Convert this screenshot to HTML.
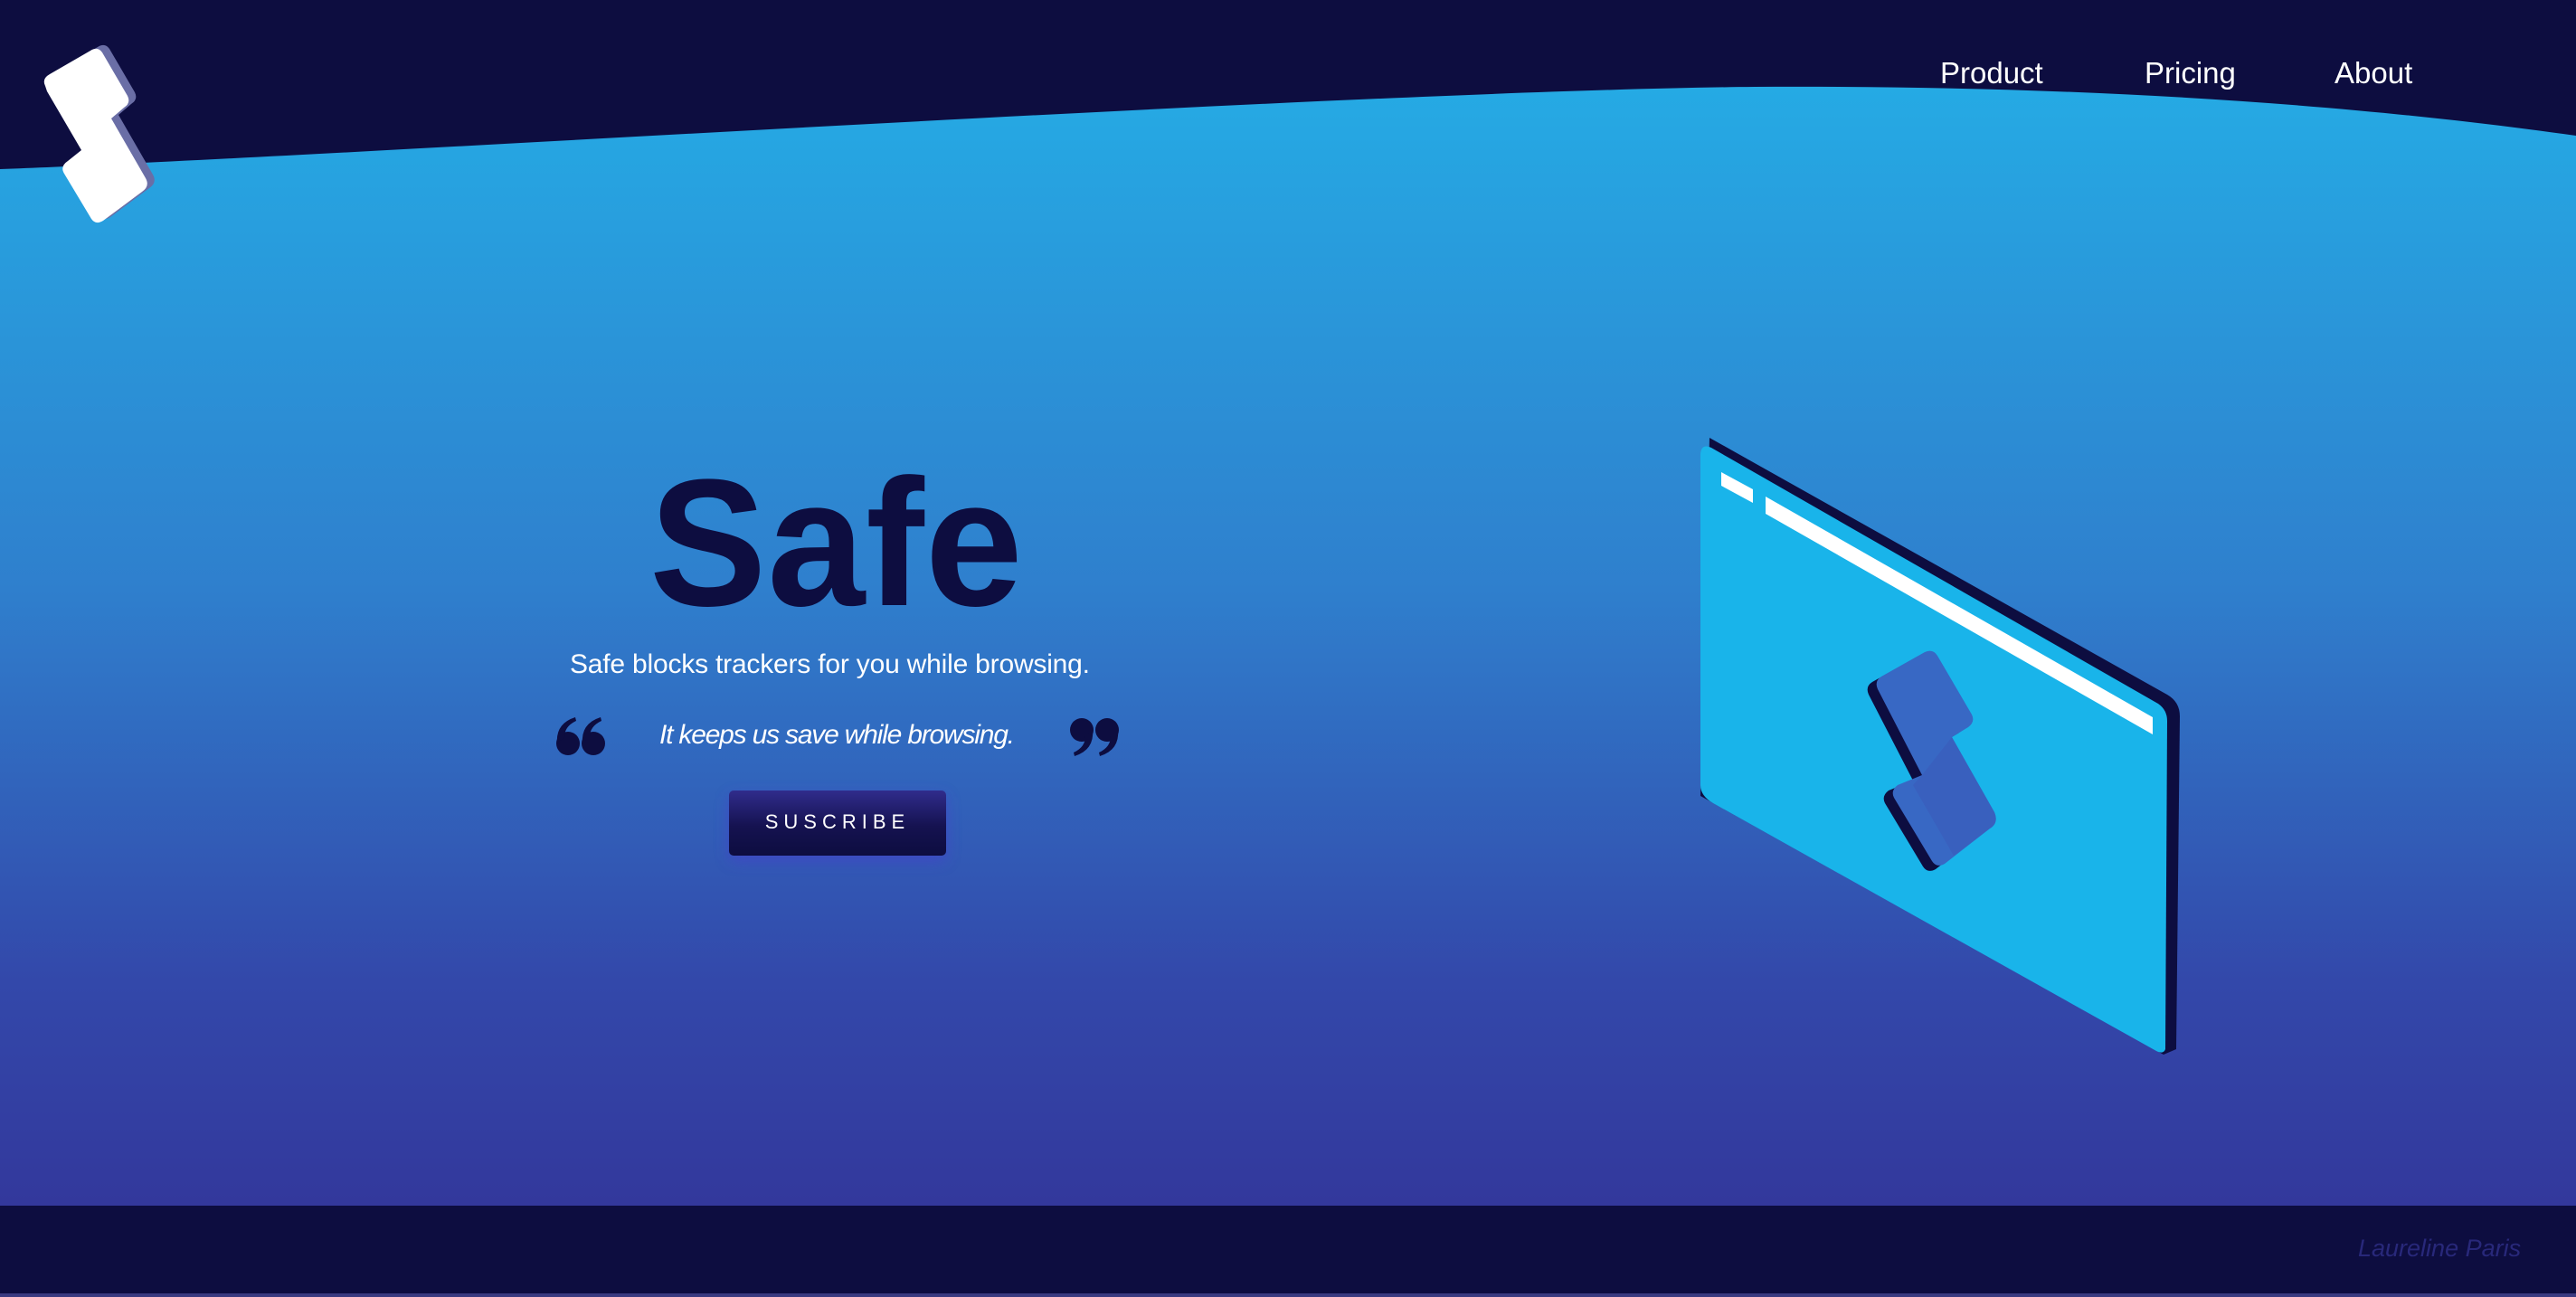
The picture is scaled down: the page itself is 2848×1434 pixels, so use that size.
<!DOCTYPE html>
<html><head><meta charset="utf-8"><style>
html,body{margin:0;padding:0}
body{width:2848px;height:1434px;position:relative;overflow:hidden;background:#0d0d40;font-family:"Liberation Sans",sans-serif}
svg.bg{position:absolute;left:0;top:0}
.nav{position:absolute;top:62px;color:#fff;font-size:33px;font-weight:300}
.t{position:absolute;white-space:nowrap}
</style></head><body>
<svg class="bg" width="2848" height="1434" viewBox="0 0 2848 1434">
<defs>
<linearGradient id="g" x1="0" y1="0" x2="0" y2="1">
<stop offset="0" stop-color="#25aae4"/>
<stop offset="0.45" stop-color="#2f7fcd"/>
<stop offset="0.8" stop-color="#3348aa"/>
<stop offset="1" stop-color="#33389c"/>
</linearGradient>
<linearGradient id="btn" x1="0" y1="0" x2="0" y2="1">
<stop offset="0" stop-color="#302c8c"/>
<stop offset="0.55" stop-color="#151250"/>
<stop offset="1" stop-color="#0d0d40"/>
</linearGradient>
<filter id="gl" x="-30%" y="-50%" width="160%" height="200%"><feGaussianBlur stdDeviation="8"/></filter>
</defs>
<rect width="2848" height="1434" fill="#0d0d40"/>
<path d="M0,187 C400,172 1500,100 1940,96 C2300,94 2600,115 2848,150 L2848,1333 L0,1333 Z" fill="url(#g)"/>
<rect y="1430" width="2848" height="4" fill="#3a3a80"/>
<g transform="translate(8,-4)" fill="#6a6ea6">
<path d="M50,95 Q46,87 55,82 L100,56 Q108,51 113,58 L141,106 Q145,114 137,119 L123,131 L161,197 Q166,206 157,212 L114,244 Q106,249 101,242 L71,192 Q66,184 75,178 L90,166 L52,101 Z"/>
</g>
<path d="M50,95 Q46,87 55,82 L100,56 Q108,51 113,58 L141,106 Q145,114 137,119 L123,131 L161,197 Q166,206 157,212 L114,244 Q106,249 101,242 L71,192 Q66,184 75,178 L90,166 L52,101 Z" fill="#fff"/>
<rect x="806" y="880" width="240" height="72" rx="6" fill="#4a3bd0" opacity="0.55" filter="url(#gl)"/>
<rect x="806" y="874" width="240" height="72" rx="5" fill="url(#btn)"/>
<g fill="#0d0d40">
<circle cx="628" cy="822" r="13"/><path d="M616,822 Q614,800 636,793 L637,797 Q624,803 624,815 Z"/>
<circle cx="656" cy="822" r="13"/><path d="M644,822 Q642,800 664,793 L665,797 Q652,803 652,815 Z"/>
<circle cx="1196" cy="807" r="13"/><path d="M1208,807 Q1210,829 1188,836 L1187,832 Q1200,826 1200,814 Z"/>
<circle cx="1224" cy="807" r="13"/><path d="M1236,807 Q1238,829 1216,836 L1215,832 Q1228,826 1228,814 Z"/>
</g>
<path d="M1890,484 L2396,768 Q2410,776 2410,792 L2406,1160 L2392,1166 L1880,880 Z" fill="#0d0d40"/>
<path d="M1892,495 L2386,778 Q2396,785 2396,797 L2394,1160 Q2392,1166 2384,1162 L1894,888 Q1880,880 1880,868 L1880,502 Q1881,490 1892,495 Z" fill="#19b4ea"/>
<path d="M1903,522 L1938,541 L1938,556 L1903,537 Z" fill="#fff"/>
<path d="M1952,549 L2380,793 L2380,812 L1952,568 Z" fill="#fff"/>
<g transform="translate(-10,6)" fill="#0d0d40">
<path d="M2080,748 L2128,721 Q2137,717 2142,725 L2180,790 Q2184,798 2176,804 L2158,815 L2205,898 Q2210,910 2200,916 L2150,955 Q2141,960 2136,952 L2094,882 Q2090,874 2098,868 L2125,857 L2076,762 Q2072,753 2080,748 Z"/>
</g>
<path d="M2080,748 L2128,721 Q2137,717 2142,725 L2180,790 Q2184,798 2176,804 L2158,815 L2205,898 Q2210,910 2200,916 L2150,955 Q2141,960 2136,952 L2094,882 Q2090,874 2098,868 L2125,857 L2076,762 Q2072,753 2080,748 Z" fill="#3868c4"/>
<path d="M2158,815 L2205,898 Q2210,910 2200,916 L2160,946 L2115,868 L2125,857 Z" fill="#3a5cbc" opacity="0.7"/>
</svg>
<div class="nav" style="left:2145px">Product</div>
<div class="nav" style="left:2371px">Pricing</div>
<div class="nav" style="left:2581px">About</div>
<div class="t" style="left:718px;top:486px;font-size:200px;font-weight:bold;color:#0d0d40;letter-spacing:1px;transform:scaleX(0.97);transform-origin:left">Safe</div>
<div class="t" style="left:630px;top:718px;font-size:30px;color:#fff;letter-spacing:-0.2px">Safe blocks trackers for you while browsing.</div>
<div class="t" style="left:729px;top:796px;font-size:30px;color:#fff;font-style:italic;letter-spacing:-1.2px">It keeps us save while browsing.</div>
<div class="t" style="left:806px;top:896px;width:240px;text-align:center;font-size:22px;color:#fff;letter-spacing:6px">SUSCRIBE</div>
<div class="t" style="left:2607px;top:1365px;font-size:27px;color:#28287a;font-style:italic">Laureline Paris</div>
</body></html>
